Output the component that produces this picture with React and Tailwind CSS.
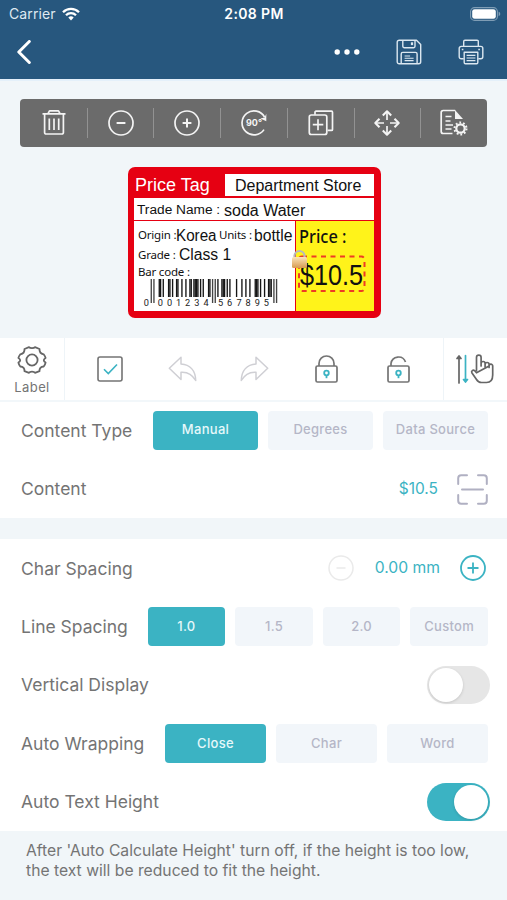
import { useState } from "react";

const L_CODES = ["0001101", "0011001", "0010011", "0111101", "0100011", "0110001", "0101111", "0111011", "0110111", "0001011"];
const R_CODES = L_CODES.map((code) => code.replace(/[01]/g, (bit) => (bit === "0" ? "1" : "0")));

// EAN-13 with a leading 0, so the left half only uses L codes
function Barcode() {
  const digits = "0001234567895".split("").map(Number);
  const left = digits.slice(1, 7).map((d) => L_CODES[d]).join("");
  const right = digits.slice(7).map((d) => R_CODES[d]).join("");
  const modules = `101${left}01010${right}101`.split("");
  const digitX = [18.3, 32.3, 41.5, 50.5, 59.5, 68.8, 78.2, 92.5, 101.6, 111, 120, 129.3, 138.4];

  return (
    <svg width="160" height="32" viewBox="0 0 160 32">
      {modules.map((bit, i) => {
        const guard = i < 3 || (i > 44 && i < 50) || i > 91;
        return bit === "1" ? (
          <rect key={i} x={22.6 + i * 1.333} y="0" width="1.34" height={guard ? 24 : 18} fill={guard ? "#444" : "#151515"} />
        ) : null;
      })}
      {digits.map((d, i) => (
        <text key={i} x={digitX[i]} y="26.6" textAnchor="middle" fontSize="9.2" fontFamily="Roboto, sans-serif" fill="#222">{d}</text>
      ))}
    </svg>
  );
}

function StatusBar() {
  return (
    <div className="h-[27px] grid grid-cols-3 items-center pl-[9px] pr-[6px] text-white">
      <div className="flex items-center gap-[6px]">
        <span className="text-[14px] tracking-[0.1px] text-[#dfe9f1]">Carrier</span>
        <svg width="18" height="14" viewBox="0 0 18 14" fill="none" stroke="#fff" strokeWidth="2.3">
          <path d="M1 5.2a11.3 11.3 0 0 1 16 0" />
          <path d="M4 8.3a7 7 0 0 1 10 0" />
          <path d="M6.3 10.6a3.8 3.8 0 0 1 5.4 0L9 13.6z" fill="#fff" stroke="none" />
        </svg>
      </div>
      <div className="pr-[2px] text-center text-[14px] font-semibold tracking-[0.35px] whitespace-nowrap">2:08 PM</div>
      <div className="flex justify-end">
        <svg width="31" height="14" viewBox="0 0 31 14">
          <rect x="0.6" y="0.6" width="26.8" height="12.8" rx="4" fill="none" stroke="#7f9db5" strokeWidth="1.1" />
          <rect x="2.2" y="2.2" width="23.6" height="9.6" rx="2.4" fill="#fff" />
          <path d="M28.6 4.8c2.2 .6 2.2 3.8 0 4.4z" fill="#7f9db5" />
        </svg>
      </div>
    </div>
  );
}

function NavBar() {
  return (
    <div className="h-[52px] flex items-center pl-4 pr-[23px]">
      <svg width="16" height="24" viewBox="0 0 16 24" fill="none" stroke="#fff" strokeWidth="3" strokeLinecap="round" strokeLinejoin="round" className="mb-[3px]">
        <path d="M13.3 1.5 2.8 12l10.5 10.5" />
      </svg>
      <div className="ml-auto flex items-center mb-[3px]">
        <svg width="26" height="6" viewBox="0 0 26 6" fill="#fff">
          <circle cx="3.2" cy="3" r="2.7" />
          <circle cx="13" cy="3" r="2.7" />
          <circle cx="22.8" cy="3" r="2.7" />
        </svg>
        <svg width="26" height="26" viewBox="0 0 26 26" fill="none" stroke="#dbe7f0" strokeWidth="1.4" strokeLinejoin="round" className="ml-[36px]">
          <path d="M3.2 1.2h17.3l4.2 4.2v17.4a2 2 0 0 1-2 2H3.2a2 2 0 0 1-2-2V3.2a2 2 0 0 1 2-2z" />
          <path d="M6.8 1.2v6a1.5 1.5 0 0 0 1.5 1.5h9.2A1.5 1.5 0 0 0 19 7.2v-6" />
          <path d="M16 3.3v2.8" strokeWidth="2.2" />
          <path d="M5.2 24.8V15a1.6 1.6 0 0 1 1.6-1.6h12.7a1.6 1.6 0 0 1 1.6 1.6v9.8" />
          <path d="M8.6 17h5.5M8.6 19.3h9M8.6 21.6h9" strokeWidth="1.1" />
        </svg>
        <svg width="26" height="26" viewBox="0 0 26 26" fill="none" stroke="#dbe7f0" strokeWidth="1.4" strokeLinejoin="round" className="ml-[36px]">
          <path d="M5.7 7.4V2.4a1.2 1.2 0 0 1 1.2-1.2h12.2a1.2 1.2 0 0 1 1.2 1.2v5" />
          <path d="M5.7 19.8H3.2a2 2 0 0 1-2-2V9.4a2 2 0 0 1 2-2h19.6a2 2 0 0 1 2 2v8.4a2 2 0 0 1-2 2h-2.5" />
          <path d="M6.2 13.2h13.6v10.4a1.2 1.2 0 0 1-1.2 1.2H7.4a1.2 1.2 0 0 1-1.2-1.2z" />
          <path d="M8.6 16.3h8.8M8.6 19h8.8M8.6 21.7h8.8" strokeWidth="1.2" />
          <path d="M3.8 10.5h1.6M20.3 10.5h1.6" />
        </svg>
      </div>
    </div>
  );
}

const TOOLS = [
  {
    name: "delete",
    icon: (
      <>
        <path d="M2.5 4.8h23M8 4.6l1.5-2.8h9L20 4.6M4.6 5v18.5A1.5 1.5 0 0 0 6.1 25h15.800a1.5 1.5 0 0 0 1.5-1.5V5" />
        <path d="M9.3 9.5V21M14 9.5V21M18.7 9.5V21" />
      </>
    ),
  },
  {
    name: "shrink",
    icon: (
      <>
        <circle cx="14" cy="14" r="12" />
        <path d="M9.600 14h8.800" strokeWidth="2" />
      </>
    ),
  },
  {
    name: "enlarge",
    icon: (
      <>
        <circle cx="14" cy="14" r="12" />
        <path d="M9.600 14h8.800M14 9.600v8.800" strokeWidth="2" />
      </>
    ),
  },
  {
    name: "rotate",
    icon: (
      <>
        <path d="M24.600 8.200A12 12 0 1 0 24 20.600" />
        <path d="M26.300 4.800v7.400l-6-2.600 4.300-1.200z" fill="#f4f4f4" stroke="none" />
        <text x="6" y="17.300" fontSize="9" fontWeight="700" fontFamily="Inter, sans-serif" fill="#f4f4f4" stroke="none">90°</text>
      </>
    ),
  },
  {
    name: "duplicate",
    icon: (
      <>
        <path d="M8 5.8V3.2a1 1 0 0 1 1-1h15.500a1 1 0 0 1 1 1v17.200a1 1 0 0 1-1 1h-4" />
        <rect x="2.3" y="6" width="17.5" height="19.5" rx="2" />
        <path d="M5.800 15.7h10.500M11 10.200v11" />
      </>
    ),
  },
  {
    name: "move",
    icon: (
      <>
        <path d="M14 11V2.500M14 17v8.500M11 14H2.500M17 14h8.500" />
        <path d="m9.800 6.500 4.200-4.200 4.200 4.200M9.800 21.500l4.200 4.200 4.200-4.200M6.500 9.800 2.300 14l4.200 4.200M21.500 9.800l4.200 4.200-4.200 4.200" strokeWidth="2.100" />
      </>
    ),
  },
  {
    name: "settings",
    icon: (
      <>
        <path d="M12.500 24.500H3.200a2 2 0 0 1-2-2v-19a2 2 0 0 1 2-2h12" />
        <path d="M15 1v9h8z" fill="#f4f4f4" stroke="none" />
        <path d="M5.500 7.500h6M5.500 12h5M5.500 16h7.500M5.500 20h6" />
        <circle cx="20.500" cy="19.500" r="4.200" strokeWidth="2.200" />
        <circle cx="20.500" cy="19.500" r="6" strokeWidth="2" strokeDasharray="1.800 1.970" />
      </>
    ),
  },
];

function EditTools() {
  return (
    <div className="h-12 pl-px rounded-[4px] bg-[#6b6b6b] flex items-center">
      {TOOLS.map((tool, i) => (
        <div key={tool.name} className={`flex-1 h-[30px] flex items-center justify-center ${i > 0 ? "border-l border-[#929292]" : ""}`}>
          <svg width="28" height="28" viewBox="0 0 28 28" fill="none" stroke="#f4f4f4" strokeWidth="1.7" strokeLinejoin="round">
            {tool.icon}
          </svg>
        </div>
      ))}
    </div>
  );
}

// Free canvas: every printed item sits at its own place on the label
function LabelCanvas() {
  return (
    <div className="relative w-[253px] h-[151px] rounded-[7px] bg-[#e60012] p-[6px] pt-[7px] pb-[7px] pr-[7px] text-[#111] whitespace-nowrap font-['Liberation_Sans',Arial,sans-serif]">
      <div className="h-full flex flex-col gap-[1.5px]">
        <div className="h-[22px] ml-[91px] bg-white" />
        <div className="h-[22px] bg-white" />
        <div className="flex-1 flex gap-[1.5px]">
          <div className="w-[160.5px] bg-white" />
          <div className="flex-1 bg-[#fff31a]" />
        </div>
      </div>
      <span className="absolute left-[7px] top-[8px] text-[18px] leading-[20px] text-white">Price Tag</span>
      <span className="absolute left-[107px] top-[9px] text-[16px] leading-[20px]">Department Store</span>
      <span className="absolute left-[9px] top-[34px] text-[13.7px] leading-[18px]">Trade Name :</span>
      <span className="absolute left-[96px] top-[34px] text-[16px] leading-[20px]">soda Water</span>
      <span className="absolute left-[10px] top-[60px] text-[11.5px] leading-[16px] tracking-[-0.2px] font-['Noto_Sans',sans-serif]">Origin :</span>
      <span className="absolute left-[48px] top-[59px] text-[16px] leading-[20px] origin-left scale-x-[0.95]">Korea</span>
      <span className="absolute left-[91px] top-[60px] text-[11.5px] leading-[16px] tracking-[-0.2px] font-['Noto_Sans',sans-serif]">Units :</span>
      <span className="absolute left-[126px] top-[59px] text-[16px] leading-[20px] origin-left scale-x-[0.98]">bottle</span>
      <span className="absolute left-[10px] top-[80px] text-[11.5px] leading-[16px] tracking-[-0.2px] font-['Noto_Sans',sans-serif]">Grade :</span>
      <span className="absolute left-[51px] top-[78px] text-[16px] leading-[20px] origin-left scale-x-[0.98]">Class 1</span>
      <span className="absolute left-[10px] top-[97px] text-[11.5px] leading-[16px] tracking-[-0.2px] font-['Noto_Sans',sans-serif]">Bar code :</span>
      <div className="absolute left-0 top-[112px]">
        <Barcode />
      </div>
      <span className="absolute left-[171px] top-[58px] text-[18px] leading-[22px] font-medium origin-left scale-x-[0.91] font-['Noto_Sans',sans-serif]">Price :</span>
      <span className="absolute left-[172px] top-[92px] text-[30px] leading-[32px] origin-left scale-x-[0.84]">$10.5</span>
      <svg width="76" height="54" viewBox="0 0 76 54" className="absolute left-[162px] top-[80px]">
        <defs>
          <linearGradient id="lockBody" x1="0" y1="0" x2="0" y2="1">
            <stop offset="0" stopColor="#fbe3b8" />
            <stop offset="1" stopColor="#d79a52" />
          </linearGradient>
        </defs>
        <rect x="9" y="9.5" width="65.500" height="34.500" rx="3" fill="none" stroke="#ee3b24" strokeWidth="2" strokeDasharray="5 4.500" />
        <path d="M4.500 12V9a5 5 0 0 1 10 0v3" fill="none" stroke="#b9b9b9" strokeWidth="2.200" />
        <rect x="2" y="10" width="15" height="11" rx="1.500" fill="url(#lockBody)" />
      </svg>
    </div>
  );
}

function LockIcon({ shackle }) {
  return (
    <svg width="23" height="28" viewBox="0 0 23 28" fill="none">
      <path d={shackle} stroke="#747474" strokeWidth="1.700" />
      <rect x="1" y="11" width="21" height="16" rx="1.500" stroke="#747474" strokeWidth="1.700" />
      <circle cx="11.500" cy="18" r="2.300" stroke="#3bb3c3" strokeWidth="1.800" />
      <path d="M11.500 20.500v2.700" stroke="#3bb3c3" strokeWidth="1.800" />
    </svg>
  );
}

function ActionBar() {
  return (
    <div className="h-16 flex bg-white border-b-2 border-[#f2f7fa]">
      <div className="w-[65px] flex flex-col items-center pt-[7px] border-r border-[#eef4f8] text-[#747474]">
        <svg width="30" height="30" viewBox="0 0 30 30" fill="none" stroke="#666" strokeWidth="1.800" strokeLinejoin="round">
          <path d="M12 2.200c1 1.200 5 1.200 6 0l4.500 1.800c-.2 2.700 1.200 4.700 4.200 5.300.8 1 1.500 1.800 1.900 3.700-2.400 1.300-2.400 3.200 0 4.500-.4 1.900-1.100 3-1.900 4-3 0-4.400 2-4.200 4.700L18 27.800c-1-1.700-5-1.700-6 0l-4.500-1.600c.2-2.700-1.200-4.700-4.200-4.700-.8-1-1.500-2.100-1.900-4 2.400-1.300 2.400-3.200 0-4.500.4-1.900 1.100-2.700 1.900-3.700 3-.6 4.400-2.600 4.200-5.300z" />
          <circle cx="15" cy="15" r="5.600" />
        </svg>
        <span className="mt-[4px] text-[13px] leading-[16px] tracking-[0.4px]">Label</span>
      </div>
      <div className="flex-1 grid grid-cols-5 place-items-center px-[9px]">
        <svg width="26" height="26" viewBox="0 0 26 26" fill="none">
          <rect x="1" y="1" width="24" height="24" rx="2" stroke="#747474" strokeWidth="1.600" />
          <path d="m7 13.200 4.300 4.300L20 8.500" stroke="#3bb3c3" strokeWidth="1.600" />
        </svg>
        <svg width="29" height="26" viewBox="0 0 29 26" fill="none" stroke="#cfcfd4" strokeWidth="1.500" strokeLinejoin="round">
          <path d="M13 1.200 1.300 12.200 13 23.500v-7.300c6.300-.5 11 1.800 14.700 8.300C27.500 14.500 22 8.600 13 8z" />
        </svg>
        <svg width="29" height="26" viewBox="0 0 29 26" fill="none" stroke="#cfcfd4" strokeWidth="1.500" strokeLinejoin="round">
          <path d="m16 1.200 11.700 11L16 23.500v-7.300C9.700 15.700 5 18 1.300 24.500 1.500 14.500 7 8.600 16 8z" />
        </svg>
        <LockIcon shackle="M4 11V8.500a7.500 7.500 0 0 1 15 0V11" />
        <LockIcon shackle="M4 11V8.500a7.500 7.500 0 0 1 14.500-1.500" />
      </div>
      <div className="w-16 flex items-center justify-center pr-[3px] border-l border-[#eef4f8]">
        <svg width="40" height="32" viewBox="0 0 40 32" fill="none" strokeLinejoin="round" strokeLinecap="round">
          <path d="M5 30V4M3 5.500 5 3l2 2.500z" stroke="#666" strokeWidth="1.700" />
          <path d="M11.500 2.500V27M9.500 26.500l2 2.500 2-2.500z" stroke="#3bb3c3" strokeWidth="1.700" />
          <path d="M22.500 17.500V4.500a2.300 2.300 0 0 1 4.600 0V13M27.100 10.500a2 2 0 0 1 4 0V14M31.100 11.500a2 2 0 0 1 4 0v3M35.100 13a1.800 1.800 0 0 1 3.600 0v9c0 4.500-2.200 7.500-6.200 7.500h-5c-2.300 0-3.800-1-5-3L18 20c-1.200-2 1-3.800 2.800-2.200l1.700 2z" stroke="#666" strokeWidth="1.700" />
        </svg>
      </div>
    </div>
  );
}

function Row({ label, children }) {
  return (
    <div className="flex-1 flex items-center pl-[21px] pr-[19px]">
      <span className="pt-px text-[17.5px] text-[#747474] whitespace-nowrap">{label}</span>
      <div className="ml-auto flex items-center">{children}</div>
    </div>
  );
}

function Segments({ options, value, onChange, width }) {
  return (
    <div className="flex gap-[10px]">
      {options.map((option) => (
        <button
          key={option}
          onClick={() => onChange(option)}
          className={`h-[39px] rounded-[4px] text-[13px] font-medium tracking-[0.3px] whitespace-nowrap ${width} ${option === value ? "bg-[#3bb3c3] text-[#e6f8fa]" : "bg-[#f2f6fa] text-[#b5b6c7]"}`}
        >
          {option}
        </button>
      ))}
    </div>
  );
}

function Toggle({ on, onClick }) {
  return (
    <button onClick={onClick} className={`w-[63px] h-[38px] mr-[-2px] p-[2px] rounded-full flex items-center ${on ? "bg-[#3bb3c3] justify-end" : "bg-[#e6e6e6]"}`}>
      <span className="w-[34px] h-[34px] rounded-full bg-white shadow-[0_1px_3px_rgba(0,0,0,0.15)]" />
    </button>
  );
}

export default function App() {
  const [contentType, setContentType] = useState("Manual");
  const [lineSpacing, setLineSpacing] = useState("1.0");
  const [wrapping, setWrapping] = useState("Close");
  const [vertical, setVertical] = useState(false);
  const [autoHeight, setAutoHeight] = useState(true);

  return (
    <div className="w-[507px] h-[900px] flex flex-col overflow-hidden bg-[#f1f6f9] font-['Inter',sans-serif]">
      <header className="h-[79px] bg-[#27577e]">
        <StatusBar />
        <NavBar />
      </header>

      {/* Label preview */}
      <div className="h-[259px] px-5 pt-[18px] flex flex-col border-t-2 border-[#e4f0fa]">
        <EditTools />
        <div className="mt-5 pl-[2px] flex justify-center">
          <LabelCanvas />
        </div>
      </div>

      <ActionBar />

      {/* Content */}
      <div className="h-[116px] bg-white flex flex-col">
        <Row label="Content Type">
          <div className="mb-[2px]">
            <Segments options={["Manual", "Degrees", "Data Source"]} value={contentType} onChange={setContentType} width="w-[105px]" />
          </div>
        </Row>
        <Row label="Content">
          <span className="text-[15.5px] text-[#3bb3c3]">$10.5</span>
          <svg width="31" height="31" viewBox="0 0 31 31" fill="none" stroke="#b0b0c2" strokeWidth="2" strokeLinecap="round" className="ml-[19px]">
            <path d="M1.200 10V4.200a3 3 0 0 1 3-3H10M21 1.200h5.800a3 3 0 0 1 3 3V10M29.800 21v5.800a3 3 0 0 1-3 3H21M10 29.800H4.200a3 3 0 0 1-3-3V21M5 15.500h21" />
          </svg>
        </Row>
      </div>

      {/* Text layout */}
      <div className="mt-[21px] h-[292px] bg-white flex flex-col">
        <Row label="Char Spacing">
          <svg width="26" height="26" viewBox="0 0 26 26" fill="none" stroke="#eaeaea" strokeWidth="1.500">
            <circle cx="13" cy="13" r="12" />
            <path d="M8.500 13h9" />
          </svg>
          <span className="ml-[21px] text-[15.7px] text-[#3bb3c3]">0.00 mm</span>
          <svg width="26" height="26" viewBox="0 0 26 26" fill="none" stroke="#3bb3c3" strokeWidth="1.800" className="ml-[20px] mr-[2px]">
            <circle cx="13" cy="13" r="12" />
            <path d="M7.500 13h11M13 7.500v11" />
          </svg>
        </Row>
        <Row label="Line Spacing">
          <Segments options={["1.0", "1.5", "2.0", "Custom"]} value={lineSpacing} onChange={setLineSpacing} width="w-[77.6px]" />
        </Row>
        <Row label="Vertical Display">
          <Toggle on={vertical} onClick={() => setVertical(!vertical)} />
        </Row>
        <Row label="Auto Wrapping">
          <Segments options={["Close", "Char", "Word"]} value={wrapping} onChange={setWrapping} width="w-[101px]" />
        </Row>
        <Row label="Auto Text Height">
          <Toggle on={autoHeight} onClick={() => setAutoHeight(!autoHeight)} />
        </Row>
      </div>

      <p className="pt-[10px] pl-[26px] text-[15.7px] leading-[19.5px] text-[#747474] whitespace-nowrap">
        After 'Auto Calculate Height' turn off, if the height is too low,
        <br />
        the text will be reduced to fit the height.
      </p>
    </div>
  );
}
